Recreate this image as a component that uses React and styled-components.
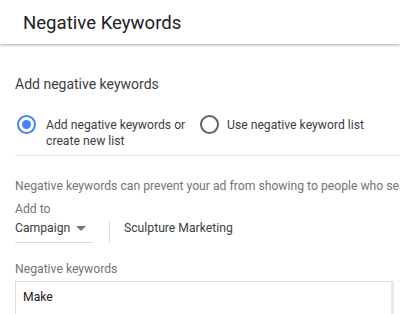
import React from "react";
import styled, { createGlobalStyle } from "styled-components";

const Global = createGlobalStyle`
  html, body { margin: 0; padding: 0; background: #fff; }
  body { font-family: Roboto, "Noto Sans", Arial, sans-serif; overflow: hidden; }
`;

const Page = styled.div`
  width: 400px;
  height: 314px;
  overflow: hidden;
  background: #fff;
`;

const Header = styled.header`
  height: 44px;
  box-sizing: border-box;
  display: flex;
  align-items: center;
  padding: 2px 0 0 23px;
  box-shadow: 0 1px 3px rgba(0, 0, 0, 0.35);
  position: relative;
  z-index: 1;
`;

const Title = styled.h1`
  margin: 0;
  font-size: 18.6px;
  font-weight: 400;
  color: #202124;
`;

const Body = styled.div`
  padding: 30px 0 0 15px;
`;

const SectionTitle = styled.div`
  font-size: 14px;
  line-height: 20px;
  color: #3c4043;
`;

const RadioGroup = styled.div`
  display: flex;
  align-items: flex-start;
  margin-top: 21px;
`;

const RadioOption = styled.label`
  display: flex;
  align-items: flex-start;
  gap: ${(p) => p.$gap}px;
  width: ${(p) => p.$width}px;
  padding-left: 2px;
`;

const RadioCircle = styled.span`
  width: 19px;
  height: 19px;
  box-sizing: border-box;
  border-radius: 50%;
  border: 2px solid ${(p) => (p.$checked ? "#4285f4" : "#5f6368")};
  display: flex;
  align-items: center;
  justify-content: center;
  flex: none;
  &::after {
    content: "";
    width: 9px;
    height: 9px;
    border-radius: 50%;
    background: ${(p) => (p.$checked ? "#4285f4" : "transparent")};
  }
`;

const RadioText = styled.span`
  font-size: 12.2px;
  line-height: 16px;
  color: #3c4043;
  margin-top: 2px;
`;

const Divider = styled.div`
  height: 1px;
  background: #e8eaed;
  margin-top: 6px;
`;

const Help = styled.div`
  margin-top: 22px;
  font-size: 12.2px;
  line-height: 16px;
  color: #70757a;
  white-space: nowrap;
  overflow: hidden;
`;

const FieldLabel = styled.div`
  font-size: 12.2px;
  line-height: 16px;
  color: #70757a;
  margin-top: ${(p) => p.$top}px;
`;

const AddRow = styled.div`
  display: flex;
  align-items: flex-start;
  margin-top: 1px;
`;

const Select = styled.div`
  width: 78px;
  display: flex;
  align-items: center;
  justify-content: space-between;
  border-bottom: 1px solid #dadce0;
  font-size: 12.2px;
  line-height: 16px;
  color: #3c4043;
  padding: 2px 0 6px;
`;

const Caret = styled.span`
  width: 0;
  height: 0;
  border-left: 5px solid transparent;
  border-right: 5px solid transparent;
  border-top: 5px solid #757575;
  margin-right: 7px;
`;

const VSep = styled.div`
  width: 1px;
  height: 22px;
  margin: 3px 14px 0 16px;
  background: #dadce0;
`;

const Value = styled.div`
  font-size: 12.2px;
  line-height: 16px;
  color: #3c4043;
  padding-top: 2px;
`;

const KeywordBox = styled.div`
  margin-top: 4px;
  width: 379px;
  height: 60px;
  box-sizing: border-box;
  border: 1px solid #dadce0;
  border-right: 3px solid #e8eaed;
  padding: 7px 7px;
  font-size: 12.2px;
  line-height: 16px;
  color: #202124;
`;

export default function App() {
  return (
    <Page>
      <Global />
      <Header>
        <Title>Negative Keywords</Title>
      </Header>
      <Body>
        <SectionTitle>Add negative keywords</SectionTitle>
        <RadioGroup>
          <RadioOption $width={181} $gap={10}>
            <RadioCircle $checked />
            <RadioText>
              Add negative keywords or
              <br />
              create new list
            </RadioText>
          </RadioOption>
          <RadioOption $width={200} $gap={8}>
            <RadioCircle />
            <RadioText>Use negative keyword list</RadioText>
          </RadioOption>
        </RadioGroup>
        <Divider />
        <Help>Negative keywords can prevent your ad from showing to people who search for</Help>
        <FieldLabel $top={7}>Add to</FieldLabel>
        <AddRow>
          <Select>
            Campaign
            <Caret />
          </Select>
          <VSep />
          <Value>Sculpture Marketing</Value>
        </AddRow>
        <FieldLabel $top={18}>Negative keywords</FieldLabel>
        <KeywordBox>Make</KeywordBox>
      </Body>
    </Page>
  );
}
